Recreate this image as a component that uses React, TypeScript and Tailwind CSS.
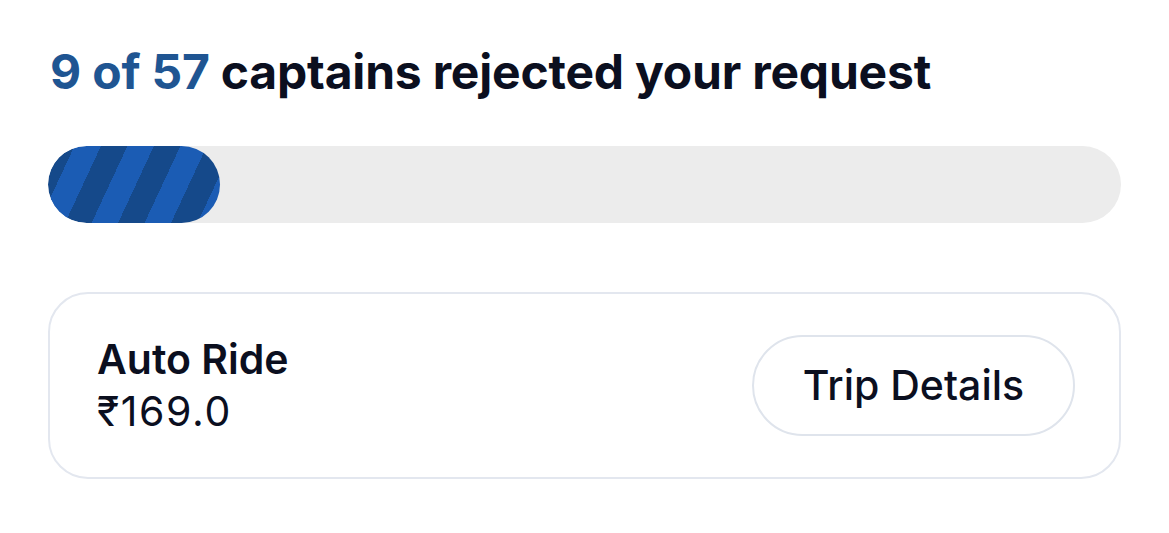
import React from "react";

export default function App() {
  return (
    <div className="w-[1169px] h-[533px] bg-white font-['Inter',sans-serif] text-[#0b0f1f]">
      <div className="px-[48px] pt-[47px]">
        <h1 className="text-[48px] h-[50px] leading-[50px] font-bold tracking-[-0.2px] pl-[2px] whitespace-nowrap">
          <span className="text-[#1f5592]">9 of 57</span> captains rejected your request
        </h1>
        <div className="mt-[49px] h-[77px] rounded-full bg-[#ececec] overflow-hidden">
          <div className="h-full w-[172px] rounded-full bg-[repeating-linear-gradient(115deg,#15498a_0_24px,#1b5cb4_24px_48px)]" />
        </div>
        <div className="mt-[69px] h-[187px] rounded-[40px] border-2 border-[#e3e7ef] flex items-center justify-between pl-[47px] pr-[44px]">
          <div className="flex flex-col pb-[2px]">
            <span className="text-[41px] leading-[52px] font-semibold">Auto Ride</span>
            <span className="text-[41px] leading-[52px] font-normal tracking-[1.6px]">₹169.0</span>
          </div>
          <button className="h-[101px] w-[323px] rounded-full border-2 border-[#dfe4ec] bg-white text-[41px] font-medium text-[#0b0f1f]">
            Trip Details
          </button>
        </div>
      </div>
    </div>
  );
}
